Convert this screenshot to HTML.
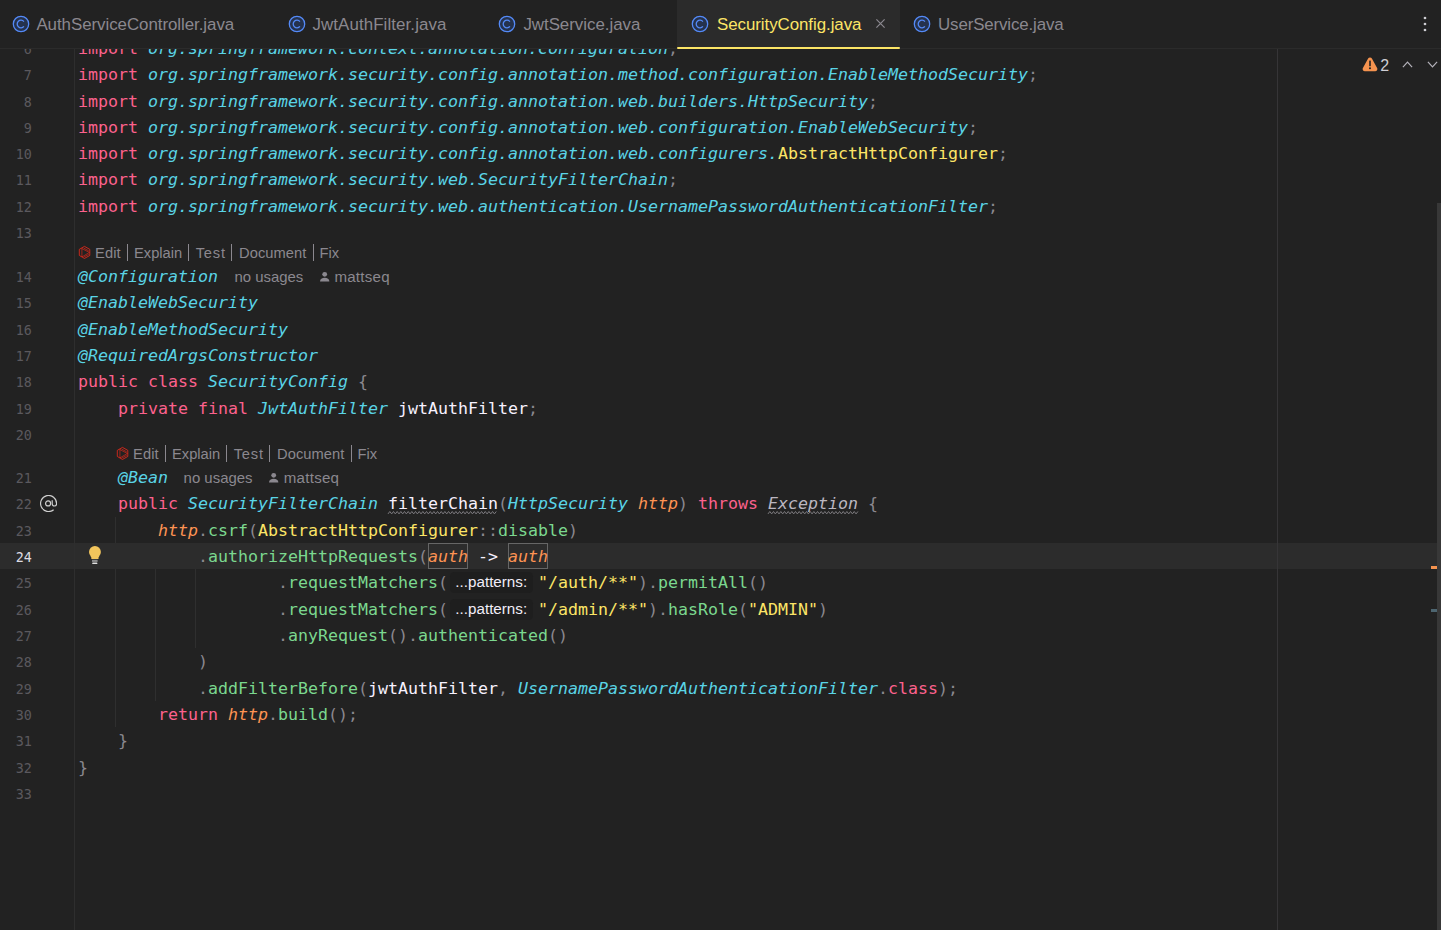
<!DOCTYPE html>
<html lang="en"><head><meta charset="utf-8"><title>SecurityConfig.java</title>
<style>
html,body{margin:0;padding:0;background:#222222;}
body{width:1441px;height:930px;overflow:hidden;position:relative;font-family:"Liberation Sans",sans-serif;}
#tabs{position:absolute;left:0;top:0;width:1441px;height:49px;background:#222222;border-bottom:1px solid #2b2b2b;box-sizing:border-box;}
#acttab{position:absolute;left:677px;top:0;width:223px;height:48px;background:#2b2b2b;}
#actline{position:absolute;left:677px;top:46.6px;width:223px;height:2.9px;background:#fce566;border-radius:1.5px;}
.cicon{position:absolute;top:14.55px;width:18px;height:18px;fill:none;stroke:#548af7;stroke-width:1.3;}
.cicon .bg{fill:#25324d;}
.tabt{position:absolute;top:14px;font-size:16.9px;line-height:22px;color:#8b888f;white-space:nowrap;}
.tabt.act{color:#fce566;}
#ed{position:absolute;left:0;top:49px;width:1441px;height:881px;overflow:hidden;}
#edin{position:absolute;left:0;top:-49px;width:1441px;height:930px;}
.row{position:absolute;left:0;width:1441px;height:26px;}
#curline{position:absolute;left:0;width:1441px;height:26.2px;background:#2c2c2c;}
.ln{position:absolute;left:-1.2px;top:1px;width:33px;text-align:right;font-family:"DejaVu Sans Mono","Liberation Mono",monospace;font-size:13.4px;line-height:26px;color:#5b595e;}
.cur .ln{color:#dedce2;}
.code{position:absolute;left:78px;top:0;margin:0;font-family:"DejaVu Sans Mono","Liberation Mono",monospace;font-size:16.615px;line-height:26px;color:#f7f1ff;white-space:pre;}
.code i{font-style:italic}
.k{color:#fc618d}.t{color:#5ad4e6}.y{color:#fce566}.g{color:#7bd88f}.o{color:#fd9353}.w{color:#f7f1ff}.p{color:#8b888f}
.exc{color:#bab6c0}
.wavy{position:absolute;top:19.9px;height:4px;fill:none;stroke:#7d7b80;stroke-width:1;overflow:visible;}
.pbox{position:absolute;top:-1px;width:40px;height:26px;box-sizing:border-box;border:1px solid #666;}
.inl{position:absolute;top:0;font-family:"Liberation Sans",sans-serif;font-size:15.1px;line-height:26px;color:#8b888f;font-style:normal;}
.inl.nu{font-size:14.95px}
.inl.au{letter-spacing:0.25px}
.hint{display:inline-block;box-sizing:border-box;width:83.5px;text-align:center;font-family:"Liberation Sans",sans-serif;font-size:15.2px;line-height:21px;height:21px;color:#f1edf8;background:#1e1e1e;border-radius:4.5px;margin:0 5px 0 1.5px;vertical-align:0.2px;}
.hint b{font-weight:normal;position:relative;top:-1.2px;}
.usr{width:11.4px;height:11.4px;fill:#8b888f;margin-right:4px;margin-bottom:-0.6px;}
.gat{position:absolute;left:39.9px;top:3.9px;width:17.2px;height:17px;fill:none;stroke:#cfcfcf;stroke-width:1.2;}
.bulb{position:absolute;left:88.7px;top:2.2px;width:12px;height:19px;}
.lens{position:absolute;font-size:14.7px;line-height:17px;color:#8b888f;white-space:nowrap;height:17px;width:400px;}
.lens .ai{position:absolute;left:-2px;top:-1.78px;width:18px;height:19px;fill:none;stroke:#f02a1a;stroke-width:0.8;stroke-linejoin:round;}
.lens .lw{position:absolute;top:0.5px;}
.lens .sep{position:absolute;top:-1px;width:1px;height:17.7px;background:#8b888f;}
.guide{position:absolute;width:1px;background:#2f2f2f;}
#gline{position:absolute;left:74px;top:0;width:1px;height:881px;background:#2e2e2e;}
#margin{position:absolute;left:1277px;top:0;width:1px;height:881px;background:#363537;}
.mk{position:absolute;left:1431px;width:6px;height:2.8px;}
#sb{position:absolute;left:1437px;top:154px;width:4px;height:727px;background:#383838;}
.ico{position:absolute;fill:none;}
#wn{position:absolute;left:1380.2px;top:56px;font-size:16px;line-height:19px;color:#cfcfd4;}
</style></head><body>
<div id="tabs"><div id="acttab"></div><svg class="cicon" style="left:11.5px" viewBox="0 0 18 18"><circle class="bg" cx="9" cy="9" r="7.7"/><path d="M11.9 6.55A3.8 3.8 0 1 0 11.9 11.45"/></svg><span class="tabt" style="left:36.4px;letter-spacing:-0.05px">AuthServiceController.java</span><svg class="cicon" style="left:287.5px" viewBox="0 0 18 18"><circle class="bg" cx="9" cy="9" r="7.7"/><path d="M11.9 6.55A3.8 3.8 0 1 0 11.9 11.45"/></svg><span class="tabt" style="left:312.4px;letter-spacing:0.1px">JwtAuthFilter.java</span><svg class="cicon" style="left:497.6px" viewBox="0 0 18 18"><circle class="bg" cx="9" cy="9" r="7.7"/><path d="M11.9 6.55A3.8 3.8 0 1 0 11.9 11.45"/></svg><span class="tabt" style="left:523.4px;letter-spacing:-0.03px">JwtService.java</span><svg class="cicon" style="left:691.2px" viewBox="0 0 18 18"><circle class="bg" cx="9" cy="9" r="7.7"/><path d="M11.9 6.55A3.8 3.8 0 1 0 11.9 11.45"/></svg><span class="tabt act" style="left:717px;letter-spacing:-0.06px">SecurityConfig.java</span><svg class="cicon" style="left:913.0px" viewBox="0 0 18 18"><circle class="bg" cx="9" cy="9" r="7.7"/><path d="M11.9 6.55A3.8 3.8 0 1 0 11.9 11.45"/></svg><span class="tabt" style="left:938px;letter-spacing:-0.13px">UserService.java</span>
<svg class="ico" style="left:875.2px;top:18.2px;width:11px;height:11px" viewBox="0 0 11 11"><path d="M1.4 1.4l8.2 8.2M9.6 1.4l-8.2 8.2" stroke="#8b888f" stroke-width="1.2"/></svg>
<svg class="ico" style="left:1421.6px;top:14.6px;width:6px;height:18px" viewBox="0 0 6 18"><circle cx="3" cy="3" r="1.35" fill="#cfcfd4"/><circle cx="3" cy="9" r="1.35" fill="#cfcfd4"/><circle cx="3" cy="15" r="1.35" fill="#cfcfd4"/></svg>
</div>
<div id="actline"></div>
<div id="ed"><div id="edin">
<div class="guide" style="left:115px;top:516.50px;height:210.34px"></div><div class="guide" style="left:155px;top:542.50px;height:158.34px"></div><div class="guide" style="left:195px;top:568.50px;height:79.34px"></div>
<div id="curline" style="top:542.90px"></div><div class="row" style="top:36px"><span class="ln">6</span><pre class="code"><span class="k">import</span> <i class="t">org.springframework.context.annotation.Configuration</i><span class="p">;</span></pre></div><div class="row" style="top:62px"><span class="ln">7</span><pre class="code"><span class="k">import</span> <i class="t">org.springframework.security.config.annotation.method.configuration.EnableMethodSecurity</i><span class="p">;</span></pre></div><div class="row" style="top:89px"><span class="ln">8</span><pre class="code"><span class="k">import</span> <i class="t">org.springframework.security.config.annotation.web.builders.HttpSecurity</i><span class="p">;</span></pre></div><div class="row" style="top:115px"><span class="ln">9</span><pre class="code"><span class="k">import</span> <i class="t">org.springframework.security.config.annotation.web.configuration.EnableWebSecurity</i><span class="p">;</span></pre></div><div class="row" style="top:141px"><span class="ln">10</span><pre class="code"><span class="k">import</span> <i class="t">org.springframework.security.config.annotation.web.configurers.</i><span class="y">AbstractHttpConfigurer</span><span class="p">;</span></pre></div><div class="row" style="top:167px"><span class="ln">11</span><pre class="code"><span class="k">import</span> <i class="t">org.springframework.security.web.SecurityFilterChain</i><span class="p">;</span></pre></div><div class="row" style="top:194px"><span class="ln">12</span><pre class="code"><span class="k">import</span> <i class="t">org.springframework.security.web.authentication.UsernamePasswordAuthenticationFilter</i><span class="p">;</span></pre></div><div class="row" style="top:220px"><span class="ln">13</span><pre class="code"> </pre></div><div class="row" style="top:264px"><span class="ln">14</span><pre class="code"><i class="t">@Configuration</i><span class="inl nu" style="left:156.4px">no usages</span><span class="inl au" style="left:241.0px"><svg class="usr" viewBox="0 0 10 10"><circle cx="5" cy="2.9" r="2.1"/><path d="M0.9 9.2c0-2.2 1.8-3.3 4.1-3.3s4.1 1.1 4.1 3.3z"/></svg>mattseq</span></pre></div><div class="row" style="top:290px"><span class="ln">15</span><pre class="code"><i class="t">@EnableWebSecurity</i></pre></div><div class="row" style="top:317px"><span class="ln">16</span><pre class="code"><i class="t">@EnableMethodSecurity</i></pre></div><div class="row" style="top:343px"><span class="ln">17</span><pre class="code"><i class="t">@RequiredArgsConstructor</i></pre></div><div class="row" style="top:369px"><span class="ln">18</span><pre class="code"><span class="k">public</span> <span class="k">class</span> <i class="t">SecurityConfig</i> <span class="p">{</span></pre></div><div class="row" style="top:396px"><span class="ln">19</span><pre class="code">    <span class="k">private</span> <span class="k">final</span> <i class="t">JwtAuthFilter</i> <span class="w">jwtAuthFilter</span><span class="p">;</span></pre></div><div class="row" style="top:422px"><span class="ln">20</span><pre class="code"> </pre></div><div class="row" style="top:465px"><span class="ln">21</span><pre class="code">    <i class="t">@Bean</i><span class="inl nu" style="left:105.6px">no usages</span><span class="inl au" style="left:190.4px"><svg class="usr" viewBox="0 0 10 10"><circle cx="5" cy="2.9" r="2.1"/><path d="M0.9 9.2c0-2.2 1.8-3.3 4.1-3.3s4.1 1.1 4.1 3.3z"/></svg>mattseq</span></pre></div><div class="row" style="top:491px"><span class="ln">22</span><svg class="gat" viewBox="0 0 17.2 17"><path d="M13.65 14.7A8 8 0 1 1 16.6 8.5V8.8A2.2 2.2 0 0 1 12.2 8.8V5.3"/><circle cx="8.1" cy="8.4" r="2.5"/></svg><svg class="wavy" style="left:387.5px;width:109.5px" viewBox="0 0 109.5 4"><polyline points="0.00,2.90 1.83,0.50 3.67,2.90 5.50,0.50 7.34,2.90 9.18,0.50 11.01,2.90 12.85,0.50 14.68,2.90 16.52,0.50 18.35,2.90 20.19,0.50 22.02,2.90 23.86,0.50 25.69,2.90 27.53,0.50 29.36,2.90 31.20,0.50 33.03,2.90 34.87,0.50 36.70,2.90 38.54,0.50 40.37,2.90 42.21,0.50 44.04,2.90 45.88,0.50 47.71,2.90 49.55,0.50 51.38,2.90 53.22,0.50 55.05,2.90 56.89,0.50 58.72,2.90 60.56,0.50 62.39,2.90 64.23,0.50 66.06,2.90 67.90,0.50 69.73,2.90 71.56,0.50 73.40,2.90 75.23,0.50 77.07,2.90 78.90,0.50 80.74,2.90 82.57,0.50 84.41,2.90 86.24,0.50 88.08,2.90 89.91,0.50 91.75,2.90 93.58,0.50 95.42,2.90 97.25,0.50 99.09,2.90 100.92,0.50 102.76,2.90 104.59,0.50 106.43,2.90 108.26,0.50"/></svg><svg class="wavy" style="left:767.8px;width:90.20000000000005px" viewBox="0 0 90.20000000000005 4"><polyline points="0.00,2.90 1.83,0.50 3.67,2.90 5.50,0.50 7.34,2.90 9.18,0.50 11.01,2.90 12.85,0.50 14.68,2.90 16.52,0.50 18.35,2.90 20.19,0.50 22.02,2.90 23.86,0.50 25.69,2.90 27.53,0.50 29.36,2.90 31.20,0.50 33.03,2.90 34.87,0.50 36.70,2.90 38.54,0.50 40.37,2.90 42.21,0.50 44.04,2.90 45.88,0.50 47.71,2.90 49.55,0.50 51.38,2.90 53.22,0.50 55.05,2.90 56.89,0.50 58.72,2.90 60.56,0.50 62.39,2.90 64.23,0.50 66.06,2.90 67.90,0.50 69.73,2.90 71.56,0.50 73.40,2.90 75.23,0.50 77.07,2.90 78.90,0.50 80.74,2.90 82.57,0.50 84.41,2.90 86.24,0.50 88.08,2.90 89.91,0.50"/></svg><pre class="code">    <span class="k">public</span> <i class="t">SecurityFilterChain</i> <span class="w">filterChain</span><span class="p">(</span><i class="t">HttpSecurity</i> <i class="o">http</i><span class="p">)</span> <span class="k">throws</span> <i class="exc">Exception</i> <span class="p">{</span></pre></div><div class="row" style="top:518px"><span class="ln">23</span><pre class="code">        <i class="o">http</i><span class="p">.</span><span class="g">csrf</span><span class="p">(</span><span class="y">AbstractHttpConfigurer</span><span class="p">::</span><span class="g">disable</span><span class="p">)</span></pre></div><div class="row cur" style="top:544px"><span class="ln">24</span><svg class="bulb" viewBox="0 0 12 19"><circle cx="5.95" cy="6" r="5.95" fill="#f2c55c"/><path d="M1.6 10H10.3C9.6 10.9 9.5 11.6 9.5 12.9H2.35C2.35 11.6 2.3 10.9 1.6 10z" fill="#f2c55c"/><rect x="3" y="13.8" width="5.6" height="2.1" fill="#8c8c8c"/><rect x="3.2" y="16.6" width="5.2" height="1.5" rx="0.7" fill="#dfdfdf"/></svg><span class="pbox" style="left:428px"></span><span class="pbox" style="left:508px"></span><pre class="code">            <span class="p">.</span><span class="g">authorizeHttpRequests</span><span class="p">(</span><i class="o">auth</i> <span class="w">-&gt;</span> <i class="o">auth</i></pre></div><div class="row" style="top:570px"><span class="ln">25</span><pre class="code">                    <span class="p">.</span><span class="g">requestMatchers</span><span class="p">(</span><span class="hint"><b>...patterns:</b></span><span class="y">"/auth/**"</span><span class="p">)</span><span class="p">.</span><span class="g">permitAll</span><span class="p">()</span></pre></div><div class="row" style="top:597px"><span class="ln">26</span><pre class="code">                    <span class="p">.</span><span class="g">requestMatchers</span><span class="p">(</span><span class="hint"><b>...patterns:</b></span><span class="y">"/admin/**"</span><span class="p">)</span><span class="p">.</span><span class="g">hasRole</span><span class="p">(</span><span class="y">"ADMIN"</span><span class="p">)</span></pre></div><div class="row" style="top:623px"><span class="ln">27</span><pre class="code">                    <span class="p">.</span><span class="g">anyRequest</span><span class="p">()</span><span class="p">.</span><span class="g">authenticated</span><span class="p">()</span></pre></div><div class="row" style="top:649px"><span class="ln">28</span><pre class="code">            <span class="p">)</span></pre></div><div class="row" style="top:676px"><span class="ln">29</span><pre class="code">            <span class="p">.</span><span class="g">addFilterBefore</span><span class="p">(</span><span class="w">jwtAuthFilter</span><span class="p">,</span> <i class="t">UsernamePasswordAuthenticationFilter</i><span class="p">.</span><span class="k">class</span><span class="p">);</span></pre></div><div class="row" style="top:702px"><span class="ln">30</span><pre class="code">        <span class="k">return</span> <i class="o">http</i><span class="p">.</span><span class="g">build</span><span class="p">();</span></pre></div><div class="row" style="top:728px"><span class="ln">31</span><pre class="code">    <span class="p">}</span></pre></div><div class="row" style="top:755px"><span class="ln">32</span><pre class="code"><span class="p">}</span></pre></div><div class="row" style="top:781px"><span class="ln">33</span><pre class="code"> </pre></div><div class="lens" style="left:78px;top:244.78px"><svg class="ai" viewBox="0 0 18 19"><path d="M8.48 3.4 13.8 6.35v6.1L8.48 15.45 3.3 12.45V6.35z"/><path d="M5.92 4.9v9.1M5.92 5.6 13.4 9.45 5.92 13.9M7.7 5.1l5 2.7M7.7 14.1l5-2.7" stroke-width="0.6"/></svg><span class="lw" style="left:17.1px;letter-spacing:0.1px">Edit</span><span class="lw" style="left:56.0px;letter-spacing:0px">Explain</span><span class="lw" style="left:117.7px;letter-spacing:0.8px">Test</span><span class="lw" style="left:161.0px;letter-spacing:0.05px">Document</span><span class="lw" style="left:241.6px;letter-spacing:-0.1px">Fix</span><span class="sep" style="left:49px"></span><span class="sep" style="left:110px"></span><span class="sep" style="left:153px"></span><span class="sep" style="left:235px"></span></div><div class="lens" style="left:116px;top:445.78px"><svg class="ai" viewBox="0 0 18 19"><path d="M8.48 3.4 13.8 6.35v6.1L8.48 15.45 3.3 12.45V6.35z"/><path d="M5.92 4.9v9.1M5.92 5.6 13.4 9.45 5.92 13.9M7.7 5.1l5 2.7M7.7 14.1l5-2.7" stroke-width="0.6"/></svg><span class="lw" style="left:17.1px;letter-spacing:0.1px">Edit</span><span class="lw" style="left:56.0px;letter-spacing:0px">Explain</span><span class="lw" style="left:117.7px;letter-spacing:0.8px">Test</span><span class="lw" style="left:161.0px;letter-spacing:0.05px">Document</span><span class="lw" style="left:241.6px;letter-spacing:-0.1px">Fix</span><span class="sep" style="left:49px"></span><span class="sep" style="left:110px"></span><span class="sep" style="left:153px"></span><span class="sep" style="left:235px"></span></div>
</div>
<div id="gline"></div><div id="margin"></div><div id="sb"></div>
<div class="mk" style="top:517.2px;background:#f5934f"></div><div class="mk" style="top:560.2px;background:#4d6570"></div>
</div>
<svg class="ico" style="left:1361.6px;top:56.6px;width:16px;height:15px" viewBox="0 0 16 15"><path d="M6.1 1.55a2.15 2.15 0 0 1 3.8 0l5.2 9.5a2.15 2.15 0 0 1-1.9 3.15H2.8a2.15 2.15 0 0 1-1.9-3.15z" fill="#f5934f"/><rect x="7.2" y="3.6" width="1.6" height="5.6" rx="0.5" fill="#222"/><circle cx="8" cy="11.3" r="1.05" fill="#222"/></svg>
<span id="wn">2</span>
<svg class="ico" style="left:1402px;top:61px;width:11px;height:7px" viewBox="0 0 11 7"><path d="M0.9 6.2 5.5 1.2 10.1 6.2" stroke="#b4b2ba" stroke-width="1.2"/></svg>
<svg class="ico" style="left:1427.2px;top:61px;width:11px;height:7px" viewBox="0 0 11 7"><path d="M0.9 0.8 5.5 5.8 10.1 0.8" stroke="#b4b2ba" stroke-width="1.2"/></svg>
</body></html>
